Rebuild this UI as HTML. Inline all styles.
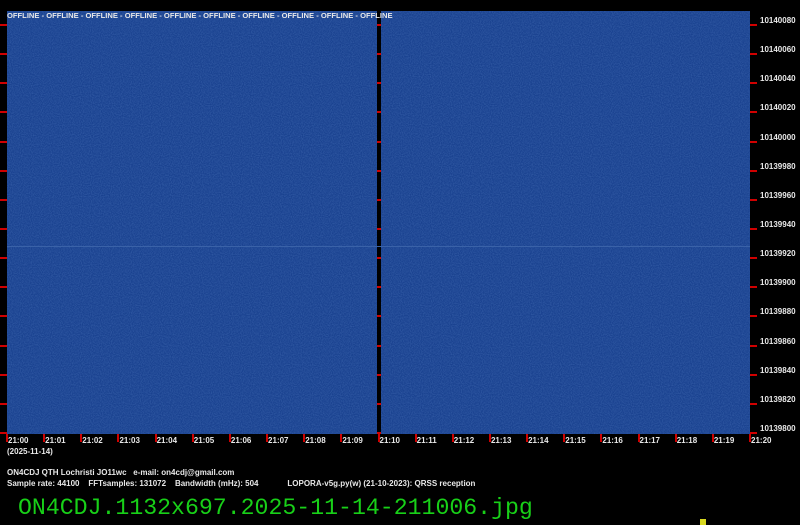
<!DOCTYPE html>
<html><head><style>
body{margin:0;width:800px;height:525px;background:#000;position:relative;overflow:hidden;font-family:"Liberation Sans",sans-serif}
.t{position:absolute;color:#e8e8e8;font-weight:bold;font-size:8px;white-space:nowrap;line-height:10px}
.p{position:absolute;top:11px;height:423px;background:#1a4290}
.r{position:absolute;background:#d00000}
</style></head><body>
<svg width="0" height="0" style="position:absolute"><filter id="n"><feTurbulence type="fractalNoise" baseFrequency="0.9" numOctaves="1" seed="3"/><feColorMatrix values="0 0 0 0 0.04  0 0 0 0 0.12  0 0 0 0 0.4  0 0 0 1.6 -0.5"/></filter></svg>
<div class="p" style="left:7px;width:370px"></div>
<div class="p" style="left:381px;width:369px"></div>
<svg style="position:absolute;left:7px;top:11px" width="743" height="423"><rect width="743" height="423" filter="url(#n)" opacity="0.9"/><rect x="370" y="0" width="4" height="423" fill="#000"/><rect y="235" width="743" height="1" fill="#3a62a8"/></svg>
<div class="t" style="left:7px;top:11px;font-size:7.6px">OFFLINE - OFFLINE - OFFLINE - OFFLINE - OFFLINE - OFFLINE - OFFLINE - OFFLINE - OFFLINE - OFFLINE</div>
<div id="yt"></div>
<div class="t" style="left:7px;top:447px">(2025-11-14)</div>
<div class="t" style="left:7px;top:468px">ON4CDJ QTH Lochristi JO11wc &nbsp; e-mail: on4cdj@gmail.com</div>
<div class="t" style="left:7px;top:479px">Sample rate: 44100 &nbsp;&nbsp; FFTsamples: 131072 &nbsp;&nbsp; Bandwidth (mHz): 504 &nbsp;&nbsp;&nbsp;&nbsp;&nbsp;&nbsp;&nbsp;&nbsp;&nbsp;&nbsp;&nbsp; LOPORA-v5g.py(w) (21-10-2023): QRSS reception</div>
<div style="position:absolute;left:18px;top:494px;font-family:'Liberation Mono',monospace;font-size:23.2px;color:#18d018;line-height:28px;white-space:nowrap">ON4CDJ.1132x697.2025-11-14-211006.jpg</div>
<div style="position:absolute;left:700px;top:519px;width:6px;height:6px;background:#d8d820"></div>
<script>
var h='';var f=['10140080','10140060','10140040','10140020','10140000','10139980','10139960','10139940','10139920','10139900','10139880','10139860','10139840','10139820','10139800'];
for(var i=0;i<15;i++){var y=25+i*29.14;h+='<div class="r" style="left:0;top:'+(y-1)+'px;width:7px;height:2px"></div><div class="r" style="left:377px;top:'+(y-1)+'px;width:4px;height:2px"></div><div class="r" style="left:750px;top:'+(y-1)+'px;width:7px;height:2px"></div><div class="t" style="left:760px;top:'+(y-9)+'px">'+f[i]+'</div>';}
for(var j=0;j<=20;j++){var x=7+j*37.15;h+='<div class="r" style="left:'+(x-1)+'px;top:434px;width:2px;height:8px"></div><div class="t" style="left:'+(x+1)+'px;top:436px">21:'+(j<10?'0':'')+j+'</div>';}
document.getElementById('yt').innerHTML=h;
</script>
</body></html>
